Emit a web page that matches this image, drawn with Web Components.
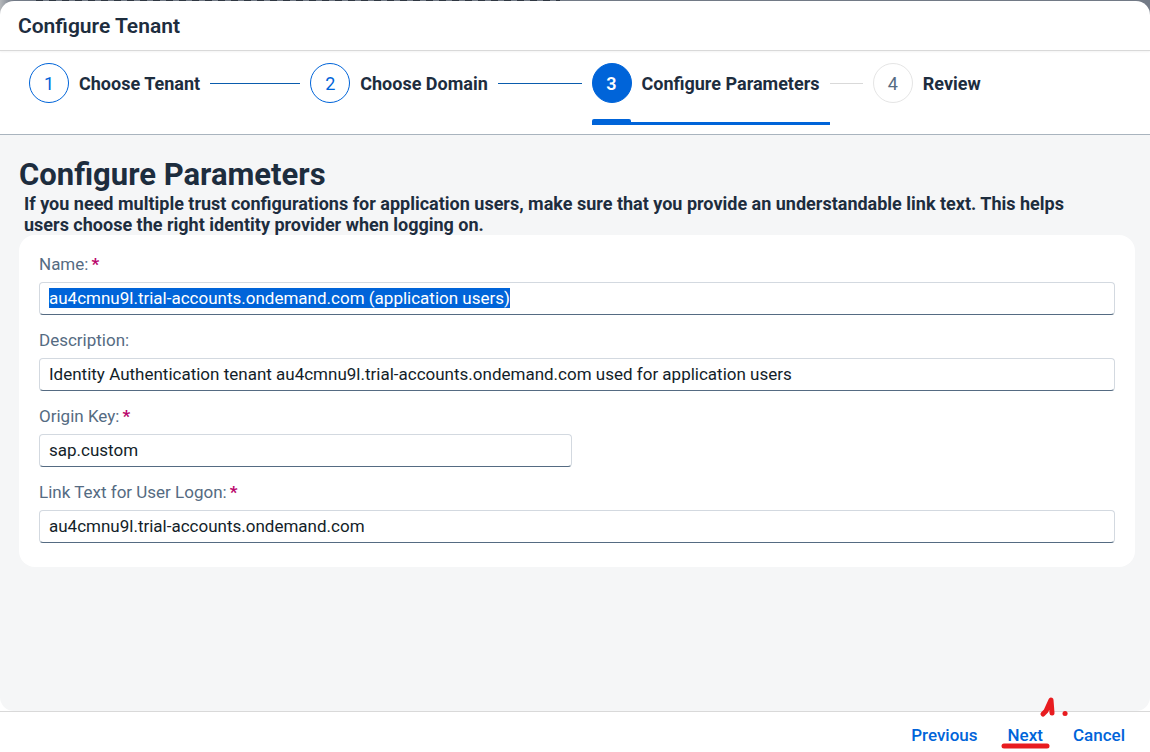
<!DOCTYPE html>
<html lang="en">
<head>
<meta charset="utf-8">
<meta name="viewport" content="width=device-width, initial-scale=1">
<title>Configure Tenant</title>
<style>
  html, body { margin: 0; height: 100%; }
  body {
    display: flex; flex-direction: column; box-sizing: border-box; padding-top: 1px;
    font-family: Roboto, "Liberation Sans", sans-serif; font-size: 17px; line-height: 21px; color: #1d2d3e;
    background:
      repeating-linear-gradient(90deg, #2f3742 0 7px, #727a86 7px 13px) no-repeat 36px 0 / 524px 1px,
      linear-gradient(90deg, #b4b7ba, #727a86 14px) no-repeat 0 0 / 100% 20px,
      #fff;
  }
  tenant-dialog { flex: 1; }
</style>
</head>
<body>
<tenant-dialog heading="Configure Tenant">
  <wizard-step slot="steps" number="1" state="done">Choose Tenant</wizard-step>
  <wizard-step slot="steps" number="2" state="done">Choose Domain</wizard-step>
  <wizard-step slot="steps" number="3" state="current">Configure Parameters</wizard-step>
  <wizard-step slot="steps" number="4" state="open" last>Review</wizard-step>

  <form-section heading="Configure Parameters">
    <span slot="hint">If you need multiple trust configurations for application users, make sure that you provide an understandable link text. This helps users choose the right identity provider when logging on.</span>
    <form-field label="Name:" required selected value="au4cmnu9l.trial-accounts.ondemand.com (application users)"></form-field>
    <form-field label="Description:" value="Identity Authentication tenant au4cmnu9l.trial-accounts.ondemand.com used for application users"></form-field>
    <form-field label="Origin Key:" required half value="sap.custom"></form-field>
    <form-field label="Link Text for User Logon:" required value="au4cmnu9l.trial-accounts.ondemand.com"></form-field>
  </form-section>

  <dialog-button slot="actions">Previous</dialog-button>
  <dialog-button slot="actions" marked>Next</dialog-button>
  <dialog-button slot="actions">Cancel</dialog-button>
</tenant-dialog>

<script>
class BaseElement extends HTMLElement {
  render(html) {
    const t = document.createElement('template');
    t.innerHTML = html;
    this.attachShadow({ mode: 'open' }).append(t.content.cloneNode(true));
  }
}

customElements.define('tenant-dialog', class extends BaseElement {
  connectedCallback() {
    if (this.shadowRoot) return;
    this.render(`
      <style>
        :host { display: flex; flex-direction: column; background: #fff; border-radius: 14px 14px 0 0; min-height: 0; }
        header { padding: 15px 18px 13px; border-bottom: 1px solid #d9d9d9; box-shadow: 0 1px 2px #0000000d; }
        h1 { margin: 0; font-size: 21px; line-height: 21px; font-weight: 600; }
        nav { display: grid; grid-template-columns: repeat(4, 1fr); gap: 10px; padding: 12px 6px 9px 29px; border-bottom: 1px solid #a9b4be; }
        main { flex: 1; background: #f5f6f7; border-radius: 0 0 14px 14px; padding: 21px 15px 20px 19px; }
        footer { display: flex; justify-content: flex-end; gap: 30px; padding: 8px 25px 2px; border-top: 1px solid #d9d9d9; }
      </style>
      <header><h1></h1></header>
      <nav aria-label="Steps"><slot name="steps"></slot></nav>
      <main><slot></slot></main>
      <footer><slot name="actions"></slot></footer>`);
    this.shadowRoot.querySelector('h1').textContent = this.getAttribute('heading');
  }
});

customElements.define('wizard-step', class extends BaseElement {
  connectedCallback() {
    if (this.shadowRoot) return;
    this.render(`
      <style>
        :host { display: flex; align-items: flex-start; min-width: 0; --ring: #0064d9; --ink: #0064d9; --disc: #fff; --line: #0a5cad; }
        :host([state=current]) { --ink: #fff; --disc: #0064d9; --line: #d9d9d9; }
        :host([state=open]) { --ink: #556b82; --ring: #e5e5e5; }
        button { position: relative; display: flex; align-items: center; gap: 10px; height: 62px; padding: 0 10px 22px 0; box-sizing: border-box; border: 0; background: none; font: inherit; font-size: 18px; font-weight: 700; color: inherit; white-space: nowrap; }
        .num { box-sizing: border-box; width: 40px; height: 40px; border: 1px solid var(--ring); border-radius: 50%; background: var(--disc); color: var(--ink); font-weight: 400; line-height: 39px; }
        :host([state=current]) .num { font-weight: 600; }
        :host([state=current]) button { background: linear-gradient(#0064d9, #0064d9) no-repeat 0 100% / 100% 3px; }
        :host([state=current]) button::before { content: ""; position: absolute; left: 0; bottom: 0; width: 39px; height: 6px; border-radius: 2px 2px 0 0; background: #0064d9; }
        .line { flex: 1; height: 1px; margin-top: 20px; background: var(--line); }
        :host([last]) .line { display: none; }
      </style>
      <button type="button"><span class="num"></span><slot></slot></button><span class="line"></span>`);
    this.shadowRoot.querySelector('.num').textContent = this.getAttribute('number');
    if (this.getAttribute('state') === 'current') this.shadowRoot.querySelector('button').setAttribute('aria-current', 'step');
  }
});

customElements.define('form-section', class extends BaseElement {
  connectedCallback() {
    if (this.shadowRoot) return;
    this.render(`
      <style>
        :host { display: block; }
        h2 { margin: 0; font-size: 31px; line-height: 37px; font-weight: 700; }
        p { margin: 0 36px 0 5px; font-size: 18px; font-weight: 700; }
        .card { display: grid; grid-template-columns: 1fr 1fr; gap: 15px 10px; padding: 19px 20px 24px; border-radius: 16px; background: #fff; }
      </style>
      <h2></h2>
      <p><slot name="hint"></slot></p>
      <div class="card"><slot></slot></div>`);
    this.shadowRoot.querySelector('h2').textContent = this.getAttribute('heading');
  }
});

customElements.define('form-field', class extends BaseElement {
  connectedCallback() {
    if (this.shadowRoot) return;
    this.render(`
      <style>
        :host { display: block; grid-column: 1 / -1; }
        :host([half]) { grid-column: auto; }
        label { display: block; margin-bottom: 7px; color: #556b82; }
        b { display: none; margin-left: 3px; color: #ba066c; }
        :host([required]) b { display: inline; }
        input { display: block; box-sizing: border-box; width: 100%; height: 33px; padding: 0 9px 2px; border: 1px solid #d3d9e0; border-bottom-color: #556b82; border-radius: 4px; background: #fff; color: #131e29; font: inherit; outline: none; }
        input::selection { background: #0064d9; color: #fff; }
      </style>
      <label for="field"><span></span><b>*</b></label>
      <input id="field" type="text">`);
    this.shadowRoot.querySelector('span').textContent = this.getAttribute('label');
    const input = this.shadowRoot.querySelector('input');
    input.value = this.getAttribute('value');
    input.required = this.hasAttribute('required');
    if (this.hasAttribute('selected')) { input.focus(); input.select(); }
  }
});

customElements.define('dialog-button', class extends BaseElement {
  connectedCallback() {
    if (this.shadowRoot) return;
    this.render(`
      <style>
        :host { display: block; position: relative; }
        button { display: block; height: 30px; padding: 0; border: 0; background: none; font: inherit; font-weight: 500; color: #0064d9; }
        svg { display: none; position: absolute; left: -7px; top: -24px; pointer-events: none; }
        :host([marked]) svg { display: block; }
      </style>
      <button type="button"><slot></slot></button>
      <svg width="68" height="54" viewBox="0 0 68 54" fill="none" stroke="#e81c20" stroke-linecap="round" stroke-linejoin="round" aria-hidden="true">
        <path d="M42 18 45 15 50 4 51 17" stroke-width="5"/>
        <path d="M64 17.500h.1" stroke-width="5"/>
        <path d="M3 50H46" stroke-width="5"/>
      </svg>`);
  }
});
</script>
</body>
</html>
